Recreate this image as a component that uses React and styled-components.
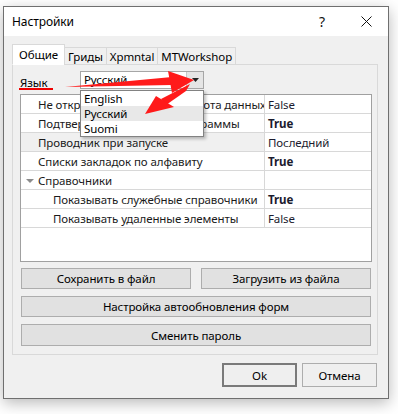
import React from 'react';
import styled, { createGlobalStyle } from 'styled-components';

const GlobalStyle = createGlobalStyle`
  html, body {
    margin: 0;
    padding: 0;
    background: #ffffff;
  }
  body {
    font-family: "Noto Sans", "Liberation Sans", sans-serif;
    font-size: 11.5px;
    letter-spacing: -0.1px;
    color: #000;
  }
`;

const rows = [
  { name: 'Не открывать при смене оборота данных', value: 'False' },
  { name: 'Подтверждать закрытие программы', value: 'True', bold: true },
  { name: 'Проводник при запуске', value: 'Последний', selected: true },
  { name: 'Списки закладок по алфавиту', value: 'True', bold: true },
  { name: 'Справочники', value: '', category: true },
  { name: 'Показывать служебные справочники', value: 'True', bold: true, level: 1 },
  { name: 'Показывать удаленные элементы', value: 'False', level: 1 },
];

const tabs = ['Общие', 'Гриды', 'Xpmntal', 'MTWorkshop'];

const Page = styled.div`
  position: relative;
  width: 398px;
  height: 414px;
  overflow: hidden;
  padding: 6px 0 0 3px;
  box-sizing: border-box;
`;

const Window = styled.div`
  width: 386px;
  height: 393px;
  box-sizing: border-box;
  border: 1px solid #6f6f6f;
  box-shadow: 0 4px 14px rgba(0, 0, 0, 0.28);
  display: flex;
  flex-direction: column;
  background: #f0f0f0;
`;

const TitleBar = styled.div`
  height: 29px;
  background: #fff;
  display: flex;
  align-items: center;
  padding-left: 8px;
  flex-shrink: 0;
`;

const Title = styled.div`
  flex: 1;
  font-size: 12px;
  color: #000;
`;

const TitleButton = styled.div`
  width: 44px;
  height: 29px;
  display: flex;
  align-items: center;
  justify-content: center;
  font-size: 14px;
  color: #111;
`;

const Body = styled.div`
  flex: 1;
  padding: 9px 10px 0 8px;
  display: flex;
  flex-direction: column;
`;

const TabStrip = styled.div`
  display: flex;
  align-items: flex-end;
  height: 20px;
  position: relative;
  z-index: 1;
  margin-bottom: -1px;
`;

const Tab = styled.div`
  box-sizing: border-box;
  height: ${p => (p.$active ? '21px' : '18px')};
  padding: 0 ${p => (p.$active ? '6px' : '3px')};
  display: flex;
  align-items: center;
  border: 1px solid #d9d9d9;
  border-bottom: ${p => (p.$active ? '1px solid #fff' : '1px solid #d9d9d9')};
  margin-left: ${p => (p.$active ? '0' : '-1px')};
  background: ${p => (p.$active ? '#fff' : '#f0f0f0')};
`;

const Panel = styled.div`
  height: 291px;
  box-sizing: border-box;
  border: 1px solid #d9d9d9;
  padding: 6px 5px 0 7px;
  display: flex;
  flex-direction: column;
`;

const LangRow = styled.div`
  position: relative;
  height: 18px;
  display: flex;
  align-items: center;
  z-index: 2;
`;

const LangLabel = styled.div`
  width: 60px;
  position: relative;
  top: 2px;
`;

const Combo = styled.div`
  position: relative;
  width: 124px;
  height: 18px;
  box-sizing: border-box;
  border: 1px solid #a6a6a6;
  background: #fff;
  display: flex;
`;

const ComboText = styled.div`
  flex: 1;
  padding-left: 3px;
  line-height: 16px;
`;

const ComboButton = styled.div`
  width: 16px;
  background: #e5e5e5;
  border-left: 1px solid #c8c8c8;
  display: flex;
  align-items: center;
  justify-content: center;
`;

const DropList = styled.div`
  position: absolute;
  left: -1px;
  top: 18px;
  width: 124px;
  box-sizing: border-box;
  border: 1px solid #828282;
  background: #fff;
  box-shadow: 2px 2px 3px rgba(0, 0, 0, 0.25);
`;

const DropItem = styled.div`
  height: 15px;
  line-height: 15px;
  padding-left: 3px;
  background: ${p => (p.$hover ? '#e8e8e8' : '#fff')};
`;

const Grid = styled.div`
  margin-top: 5px;
  height: 168px;
  box-sizing: border-box;
  border: 1px solid #a0a0a0;
  background: #fff;
`;

const Row = styled.div`
  display: flex;
  height: 19px;
  box-sizing: border-box;
  border-bottom: 1px solid #d8d8d8;
  background: ${p => (p.$selected ? '#f0f0f0' : '#fff')};
`;

const NameCell = styled.div`
  width: 244px;
  box-sizing: border-box;
  border-right: 1px solid #d8d8d8;
  padding-left: ${p => (p.$level ? '32px' : '17px')};
  display: flex;
  align-items: center;
  white-space: nowrap;
  overflow: hidden;
  color: #1b1b1b;
  position: relative;
`;

const ValueCell = styled.div`
  flex: 1;
  padding-left: 3px;
  display: flex;
  align-items: center;
  font-weight: ${p => (p.$bold ? 700 : 400)};
  color: #1b1b2e;
  background: #fff;
`;

const Caret = styled.span`
  position: absolute;
  left: 5px;
  top: 8px;
  width: 0;
  height: 0;
  border-left: 4px solid transparent;
  border-right: 4px solid transparent;
  border-top: 4px solid #8c8c8c;
`;

const ButtonRow = styled.div`
  display: flex;
  gap: 10px;
  padding: 0 1px;
  margin-top: ${p => p.$gap || '7px'};
`;

const Button = styled.div`
  flex: 1;
  height: ${p => p.$h || '21px'};
  box-sizing: border-box;
  border: 1px solid #adadad;
  background: #e1e1e1;
  display: flex;
  align-items: center;
  justify-content: center;
`;

const Footer = styled.div`
  display: flex;
  justify-content: flex-end;
  gap: 5px;
  margin-top: 8px;
  padding-right: 1px;
`;

const DialogButton = styled.div`
  width: 75px;
  height: 24px;
  box-sizing: border-box;
  border: 1px solid ${p => (p.$default ? '#7a7a7a' : '#adadad')};
  box-shadow: ${p => (p.$default ? 'inset 0 0 0 1px #7a7a7a' : 'none')};
  background: #efefef;
  display: flex;
  align-items: center;
  justify-content: center;
`;

const Overlay = styled.svg`
  position: absolute;
  left: 0;
  top: 0;
  pointer-events: none;
  z-index: 5;
`;

function CloseIcon() {
  return (
    <svg width="11" height="11" viewBox="0 0 11 11">
      <path d="M0.5 0.5 L10.5 10.5 M10.5 0.5 L0.5 10.5" stroke="#111" strokeWidth="1" />
    </svg>
  );
}

function Arrows() {
  return (
    <Overlay width="398" height="414" viewBox="0 0 398 414">
      <rect x="19" y="88" width="34" height="2" fill="#ee0000" />
      <polygon points="65,87 172,77 172,85" fill="#ff1a1a" />
      <polygon points="168,71 194,80 172,93" fill="#ff1a1a" />
      <polygon points="190,84 186,91 166,105 161,99" fill="#ff1a1a" />
      <polygon points="145,114 156,96 174,107" fill="#ff1a1a" />
    </Overlay>
  );
}

export default function App() {
  return (
    <Page>
      <GlobalStyle />
      <Window>
        <TitleBar>
          <Title>Настройки</Title>
          <TitleButton>?</TitleButton>
          <TitleButton><CloseIcon /></TitleButton>
        </TitleBar>
        <Body>
          <TabStrip>
            {tabs.map((t, i) => (
              <Tab key={t} $active={i === 0}>{t}</Tab>
            ))}
          </TabStrip>
          <Panel>
            <LangRow>
              <LangLabel>Язык</LangLabel>
              <Combo>
                <ComboText>Русский</ComboText>
                <ComboButton>
                  <svg width="7" height="4" viewBox="0 0 7 4"><polygon points="0,0 7,0 3.5,4" fill="#222" /></svg>
                </ComboButton>
                <DropList>
                  <DropItem>English</DropItem>
                  <DropItem $hover>Русский</DropItem>
                  <DropItem>Suomi</DropItem>
                </DropList>
              </Combo>
            </LangRow>
            <Grid>
              {rows.map(r => (
                <Row key={r.name} $selected={r.selected}>
                  <NameCell $level={r.level}>
                    {r.category && <Caret />}
                    {r.name}
                  </NameCell>
                  <ValueCell $bold={r.bold}>{r.value}</ValueCell>
                </Row>
              ))}
            </Grid>
            <ButtonRow $gap="6px">
              <Button>Сохранить в файл</Button>
              <Button>Загрузить из файла</Button>
            </ButtonRow>
            <ButtonRow>
              <Button>Настройка автообновления форм</Button>
            </ButtonRow>
            <ButtonRow>
              <Button $h="22px">Сменить пароль</Button>
            </ButtonRow>
          </Panel>
          <Footer>
            <DialogButton $default>Ok</DialogButton>
            <DialogButton>Отмена</DialogButton>
          </Footer>
        </Body>
      </Window>
      <Arrows />
    </Page>
  );
}
